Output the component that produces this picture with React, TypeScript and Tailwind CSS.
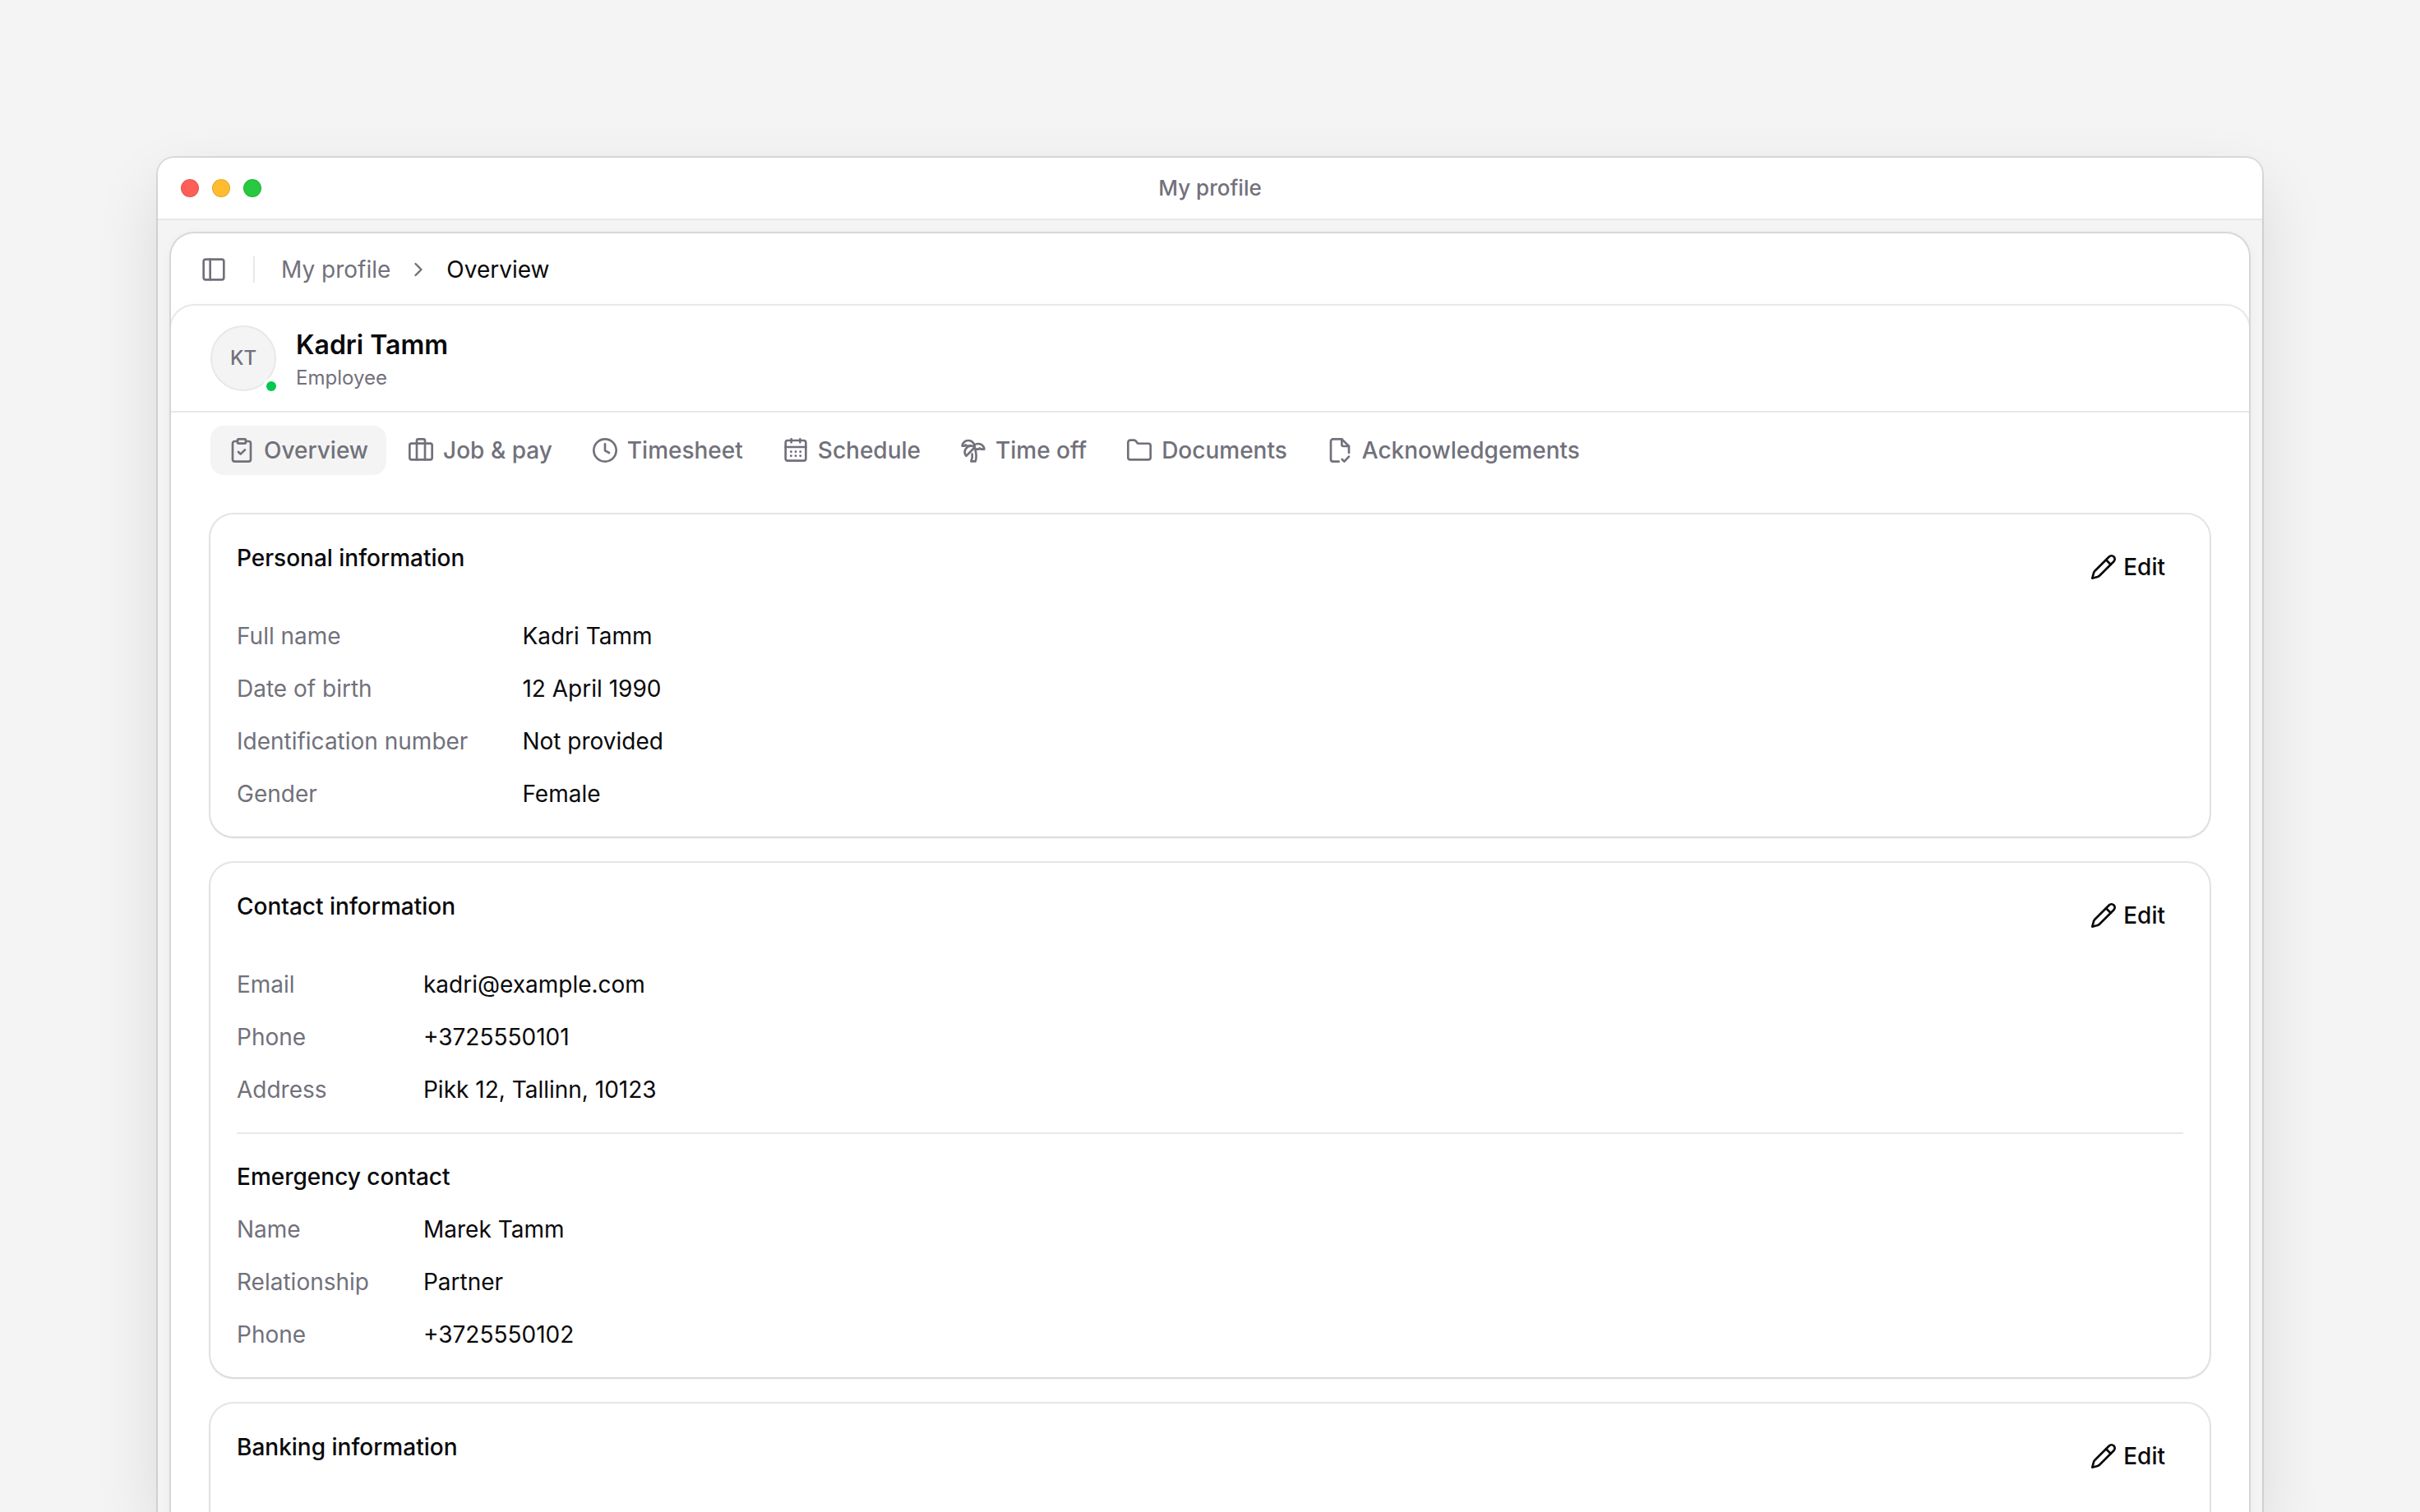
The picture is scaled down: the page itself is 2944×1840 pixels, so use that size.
import type { ReactNode } from 'react';
import { ChevronRight, TreePalm } from 'lucide-react';

type Field = { label: string; value: string };

function Icon({ children }: { children: ReactNode }) {
  return (
    <svg
      viewBox="0 0 24 24"
      fill="none"
      stroke="currentColor"
      strokeWidth="2"
      strokeLinecap="round"
      strokeLinejoin="round"
      aria-hidden="true"
      className="size-8 shrink-0"
    >
      {children}
    </svg>
  );
}

const clipboardIcon = (
  <Icon>
    <path d="M8.25 3.75h-2.5a2 2 0 0 0-2 2v14.5a2 2 0 0 0 2 2h12.5a2 2 0 0 0 2-2V5.75a2 2 0 0 0-2-2h-2.5" />
    <rect x="8.25" y="1.75" width="7.5" height="4" rx="1" />
    <path d="m9 13.5 2 2 4-4" />
  </Icon>
);

const briefcaseIcon = (
  <Icon>
    <rect x="1.75" y="5.75" width="20.5" height="14.75" rx="1.75" />
    <path d="M8.25 20.5V3.25a1.5 1.5 0 0 1 1.5-1.5h4.5a1.5 1.5 0 0 1 1.5 1.5V20.5" />
  </Icon>
);

const clockIcon = (
  <Icon>
    <circle cx="12" cy="12" r="10.25" />
    <path d="M12 6.25v6l3.75 2" />
  </Icon>
);

const calendarIcon = (
  <Icon>
    <rect x="2.75" y="3" width="18.5" height="18.5" rx="2" />
    <path d="M2.75 9h18.5M8 1.75v3M16 1.75v3" />
    <g fill="currentColor" stroke="none">
      <circle cx="7.75" cy="13.25" r="1.1" />
      <circle cx="12" cy="13.25" r="1.1" />
      <circle cx="16.25" cy="13.25" r="1.1" />
      <circle cx="7.75" cy="17" r="1.1" />
      <circle cx="12" cy="17" r="1.1" />
      <circle cx="16.25" cy="17" r="1.1" />
    </g>
  </Icon>
);

const folderIcon = (
  <Icon>
    <path d="M1.75 18.5V4.75a2 2 0 0 1 2-2h3.6a2 2 0 0 1 1.65.9l.95 1.35a1.8 1.8 0 0 0 1.5.8h8.8a2 2 0 0 1 2 2v10.7a2 2 0 0 1-2 2H3.75a2 2 0 0 1-2-2z" />
  </Icon>
);

const fileCheckIcon = (
  <Icon>
    <path d="M11 22.25H5.75a2 2 0 0 1-2-2V3.75a2 2 0 0 1 2-2h8L20.25 8.25v6" />
    <path d="M13.75 1.75v5a1.5 1.5 0 0 0 1.5 1.5h5" />
    <path d="m14 20.25 2 2 4.25-4.5" />
  </Icon>
);

const palmIcon = <TreePalm className="size-8 shrink-0" />;

const tabs: { label: string; icon: ReactNode }[] = [
  { label: 'Overview', icon: clipboardIcon },
  { label: 'Job & pay', icon: briefcaseIcon },
  { label: 'Timesheet', icon: clockIcon },
  { label: 'Schedule', icon: calendarIcon },
  { label: 'Time off', icon: palmIcon },
  { label: 'Documents', icon: folderIcon },
  { label: 'Acknowledgements', icon: fileCheckIcon },
];

const personal: Field[] = [
  { label: 'Full name', value: 'Kadri Tamm' },
  { label: 'Date of birth', value: '12 April 1990' },
  { label: 'Identification number', value: 'Not provided' },
  { label: 'Gender', value: 'Female' },
];

const contact: Field[] = [
  { label: 'Email', value: 'kadri@example.com' },
  { label: 'Phone', value: '+3725550101' },
  { label: 'Address', value: 'Pikk 12, Tallinn, 10123' },
];

const emergency: Field[] = [
  { label: 'Name', value: 'Marek Tamm' },
  { label: 'Relationship', value: 'Partner' },
  { label: 'Phone', value: '+3725550102' },
];

function Fields({ items }: { items: Field[] }) {
  return (
    <dl className="col-span-2 grid grid-cols-subgrid gap-y-6">
      {items.map((item) => (
        <div key={item.label} className="col-span-2 grid grid-cols-subgrid">
          <dt className="text-zinc-500">{item.label}</dt>
          <dd>{item.value}</dd>
        </div>
      ))}
    </dl>
  );
}

function Card({ title, children }: { title: string; children?: ReactNode }) {
  return (
    <section className="rounded-[28px] bg-white p-8 shadow-[0_2px_4px_rgba(0,0,0,0.06)] ring-2 ring-black/10">
      <div className="mb-8 flex items-start justify-between">
        <h2 className="font-medium leading-[42px]">{title}</h2>
        <button type="button" className="flex h-16 items-center gap-2 rounded-2xl px-[22px] font-medium">
          <Icon>
            <path d="M17.1 2.6a3.04 3.04 0 0 1 4.3 4.3L8.6 19.7c-.6.6-1.3 1-2.1 1.3l-4.75 1.25L3 17.5c.2-.8.7-1.5 1.3-2.1z" />
            <path d="m14.3 5.4 4.3 4.3" />
          </Icon>
          Edit
        </button>
      </div>
      <div className="grid grid-cols-[auto_1fr] gap-x-[66px] gap-y-6">{children}</div>
    </section>
  );
}

export default function App() {
  return (
    <main className="flex h-screen overflow-hidden bg-[#f4f4f4] px-48 pt-48 font-[Inter,sans-serif] text-[28px] leading-10 text-zinc-950">
      <div className="flex min-w-0 flex-1 flex-col rounded-t-[20px] shadow-[0_32px_80px_rgba(0,0,0,0.11)] ring-2 ring-black/10">
        <div className="relative flex items-center justify-center rounded-t-[20px] border-b-2 border-[#e8e8e8] bg-white py-[17px]">
          <div className="absolute left-7 flex gap-4">
            <span className="size-[22px] rounded-full border border-black/10 bg-[#ff5f57]" />
            <span className="size-[22px] rounded-full border border-black/10 bg-[#febc2e]" />
            <span className="size-[22px] rounded-full border border-black/10 bg-[#28c840]" />
          </div>
          <h1 className="text-[26px] font-medium text-zinc-500">My profile</h1>
        </div>

        <div className="flex-1 bg-[#f4f4f4] px-4 pt-4">
          <div className="overflow-hidden rounded-t-[28px] bg-white shadow-[0_4px_16px_rgba(0,0,0,0.05)] ring-2 ring-black/10">
            <header className="flex h-[88px] items-center px-9">
              <button type="button" aria-label="Toggle sidebar" className="text-zinc-500">
                <Icon>
                  <rect x="2.75" y="2.75" width="18.5" height="18.5" rx="2" />
                  <path d="M8.75 2.75v18.5" />
                </Icon>
              </button>
              <div className="mx-8 h-8 w-[2px] bg-[#e8e8e8]" />
              <nav aria-label="Breadcrumb" className="flex items-center gap-5">
                <a href="#profile" className="text-zinc-500">My profile</a>
                <ChevronRight className="size-7 text-zinc-500" />
                <span aria-current="page">Overview</span>
              </nav>
            </header>

            <div className="rounded-t-[28px] shadow-[0_0_12px_rgba(0,0,0,0.03)] ring-2 ring-black/8">
              <div className="flex items-center gap-6 border-b-2 border-[#e8e8e8] px-12 py-6">
                <div className="relative flex size-20 items-center justify-center rounded-full border-2 border-[#e8e8e8] bg-[#f4f4f4] text-2xl font-medium text-zinc-500">
                  KT
                  <span className="absolute -right-0.5 -bottom-0.5 size-3 rounded-full bg-[#00c950] ring-4 ring-white" />
                </div>
                <div className="flex flex-col gap-1 pt-1">
                  <p className="text-[32px] font-semibold">Kadri Tamm</p>
                  <p className="text-2xl text-zinc-500">Employee</p>
                </div>
              </div>

              <nav aria-label="Profile sections" className="flex gap-1 px-12 py-4">
                {tabs.map(({ label, icon }, i) => (
                  <a
                    key={label}
                    href="#tab"
                    className={
                      i === 0
                        ? 'flex h-[60px] items-center gap-[11px] rounded-2xl bg-[#f4f4f4] px-[22px] font-medium text-zinc-500'
                        : 'flex h-[60px] items-center gap-[11px] rounded-2xl px-[22px] font-medium text-zinc-500'
                    }
                  >
                    {icon}
                    {label}
                  </a>
                ))}
              </nav>

              <div className="flex flex-col gap-8 px-12 pt-8 pb-12">
                <Card title="Personal information">
                  <Fields items={personal} />
                </Card>
                <Card title="Contact information">
                  <Fields items={contact} />
                  <h3 className="col-span-2 mt-2 border-t-2 border-[#e8e8e8] pt-8 font-medium">Emergency contact</h3>
                  <Fields items={emergency} />
                </Card>
                <Card title="Banking information" />
              </div>
            </div>
          </div>
        </div>
      </div>
    </main>
  );
}
